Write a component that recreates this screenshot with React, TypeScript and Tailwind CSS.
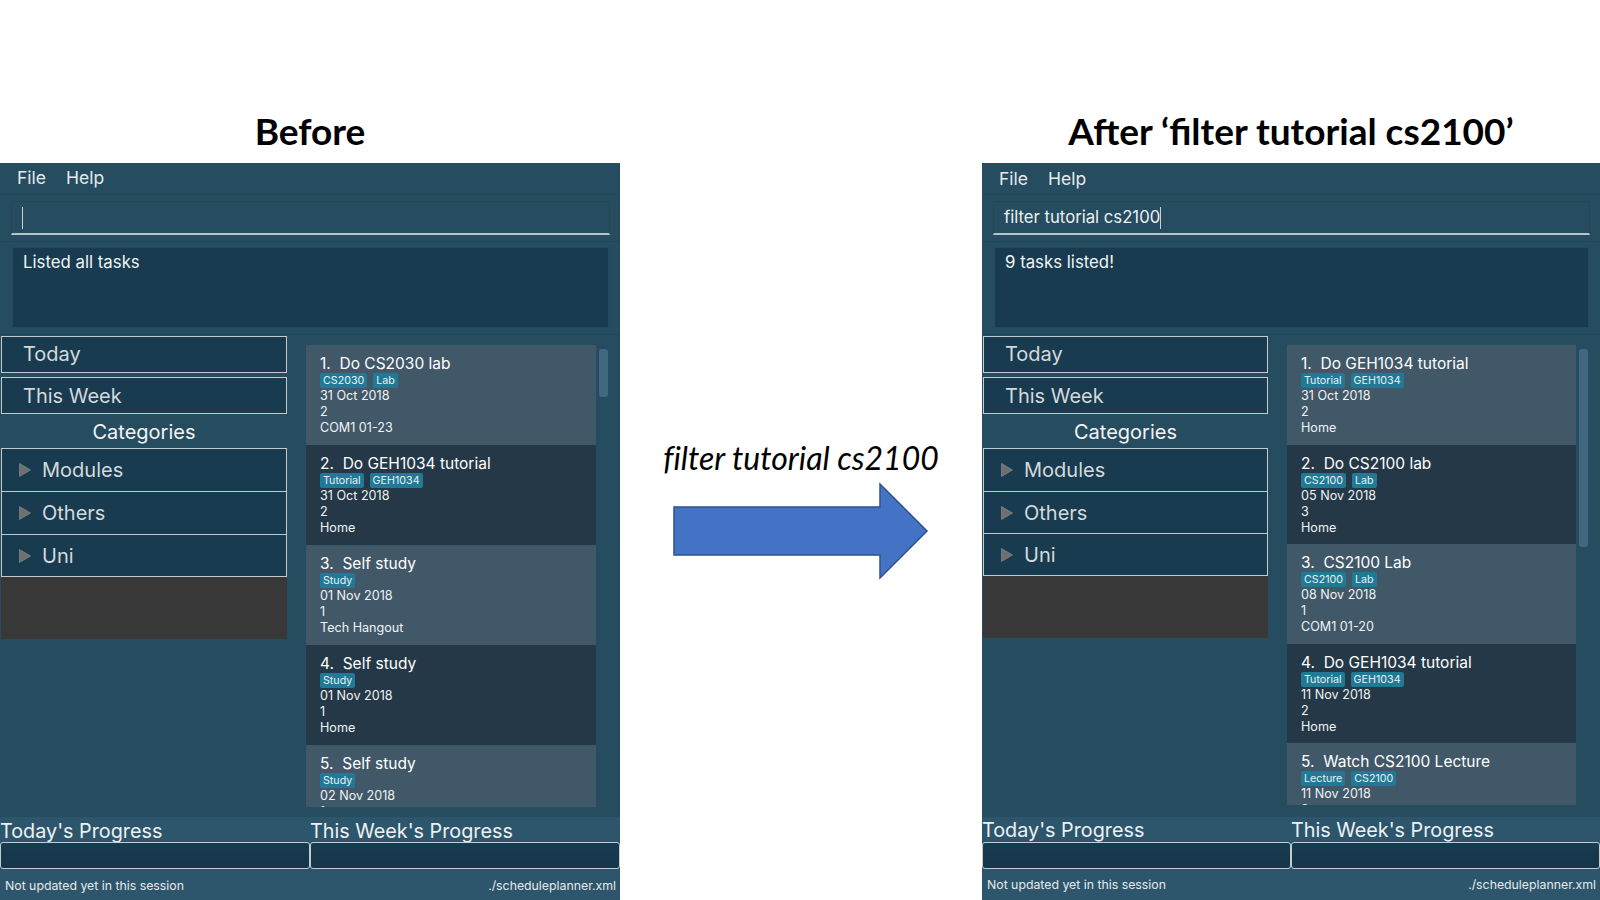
interface Task {
  title: string
  tags: string[]
  date: string
  priority: string
  venue: string
}

const beforeTasks: Task[] = [
  { title: '1.  Do CS2030 lab', tags: ['CS2030', 'Lab'], date: '31 Oct 2018', priority: '2', venue: 'COM1 01-23' },
  { title: '2.  Do GEH1034 tutorial', tags: ['Tutorial', 'GEH1034'], date: '31 Oct 2018', priority: '2', venue: 'Home' },
  { title: '3.  Self study', tags: ['Study'], date: '01 Nov 2018', priority: '1', venue: 'Tech Hangout' },
  { title: '4.  Self study', tags: ['Study'], date: '01 Nov 2018', priority: '1', venue: 'Home' },
  { title: '5.  Self study', tags: ['Study'], date: '02 Nov 2018', priority: '1', venue: 'Home' },
]

const afterTasks: Task[] = [
  { title: '1.  Do GEH1034 tutorial', tags: ['Tutorial', 'GEH1034'], date: '31 Oct 2018', priority: '2', venue: 'Home' },
  { title: '2.  Do CS2100 lab', tags: ['CS2100', 'Lab'], date: '05 Nov 2018', priority: '3', venue: 'Home' },
  { title: '3.  CS2100 Lab', tags: ['CS2100', 'Lab'], date: '08 Nov 2018', priority: '1', venue: 'COM1 01-20' },
  { title: '4.  Do GEH1034 tutorial', tags: ['Tutorial', 'GEH1034'], date: '11 Nov 2018', priority: '2', venue: 'Home' },
  { title: '5.  Watch CS2100 Lecture', tags: ['Lecture', 'CS2100'], date: '11 Nov 2018', priority: '2', venue: 'Home' },
]

function TaskCard({ task, index, compact }: { task: Task; index: number; compact: boolean }) {
  return (
    <div
      className={`shrink-0 pl-[14px] pt-[9px] text-[12.6px] leading-[16.2px] text-[#f0f3f5] ${compact ? 'h-[99.5px]' : 'h-[100px]'} ${
        index % 2 === 0 ? 'bg-[#415868]' : 'bg-[#243847]'
      }`}
    >
      <div className="h-[19px] whitespace-pre text-[15.5px] leading-[19px] text-white">{task.title}</div>
      <div className="flex h-[15px] gap-[6px]">
        {task.tags.map((tag) => (
          <span key={tag} className="h-[15px] rounded-[2px] bg-[#207a96] px-[3px] text-[10.7px] leading-[15px] text-[#e8f1f4]">
            {tag}
          </span>
        ))}
      </div>
      <div>{task.date}</div>
      <div>{task.priority}</div>
      <div>{task.venue}</div>
    </div>
  )
}

function Expander({ label, last, compact }: { label: string; last?: boolean; compact: boolean }) {
  return (
    <div
      className={`flex items-center border-x border-t border-[#c4cbd0] bg-[#183b4f] pl-[17px] text-[20px] text-[#d5d9dc] ${compact ? 'h-[42.7px]' : 'h-[43px]'} ${
        last ? 'border-b' : ''
      }`}
    >
      <svg width="12" height="14" viewBox="0 0 12 14" className="mr-[11px]">
        <path d="M0.5 0.5 L11.5 7 L0.5 13.5 Z" fill="#6f6f6f" stroke="#8d9497" strokeWidth="0.6" />
      </svg>
      {label}
    </div>
  )
}

function PlannerWindow({ command, message, tasks, compact }: { command: string; message: string; tasks: Task[]; compact: boolean }) {
  return (
    <div className="flex h-full flex-col bg-[#254c5f] font-['Inter',sans-serif]">
      <div className={`flex h-[31px] shrink-0 items-center gap-[20px] pl-[17px] text-[17.5px] text-[#e6e9eb] ${compact ? 'pt-[1px]' : ''}`}>
        <span>File</span>
        <span>Help</span>
      </div>

      {/* command box */}
      <div className="h-[47px] shrink-0 border-t border-[#234759] pl-[11px] pr-[10px] pt-[6px]">
        <div className="flex h-[34px] items-center border border-b-2 border-[#2d4350] border-b-[#b6c4cc] pl-[10px] text-[16.7px] text-[#eef1f3]">
          <span>{command}</span>
          <span className="h-[22px] w-px bg-[#c6d0d6]" />
        </div>
      </div>

      {/* result box */}
      <div className="h-[93px] shrink-0 border-t border-[#234759] pl-[12px] pr-[11px] pt-[5px]">
        <div className="h-[81px] border border-[#234a5d] bg-[#183b4f] pl-[10px] pt-[3px] text-[16.8px] leading-[22px] text-[#f2f4f5]">
          {message}
        </div>
      </div>

      <div className="flex min-h-0 flex-1 border-t border-[#234759]">
        {/* left panel */}
        <div className={`shrink-0 border-r border-[#2b4a5c] pt-[1px] ${compact ? 'w-[288px]' : 'w-[289px]'}`}>
          <div className="mx-[1px]">
            <div className="flex h-[37px] items-center border border-[#c4cbd0] bg-[#183b4f] pb-[1px] pl-[21px] text-[20px] text-[#d5d9dc]">Today</div>
            <div className="mt-[4px] flex h-[37px] items-center border border-[#c4cbd0] bg-[#183b4f] pl-[21px] text-[20px] text-[#d5d9dc]">This Week</div>
            <div className="flex h-[34px] items-center justify-center pt-[1px] text-[20px] text-[#f2f4f5]">Categories</div>
            <Expander label="Modules" compact={compact} />
            <Expander label="Others" compact={compact} />
            <Expander label="Uni" last compact={compact} />
            <div className="h-[62px] bg-[#383838]" />
          </div>
        </div>

        {/* task list */}
        <div className="flex min-w-0 flex-1 pl-[17px] pt-[10px]">
          <div className={`flex flex-col overflow-hidden ${compact ? 'h-[460px] w-[289px]' : 'h-[462px] w-[290px]'}`}>
            {tasks.map((task, i) => (
              <TaskCard key={task.title} task={task} index={i} compact={compact} />
            ))}
          </div>
          <div className="ml-[3px] mt-[4px]">
            <div className={`w-[9px] rounded-[3px] bg-[#41687f] ${compact ? 'h-[198px]' : 'h-[48px]'}`} />
          </div>
        </div>
      </div>

      {/* progress + status */}
      <div className="shrink-0 bg-[#2d566c]">
        <div className={`grid h-[25px] grid-cols-2 text-[19.8px] leading-[25px] text-[#eef1f3] ${compact ? 'pt-[1px]' : 'pt-[2px]'}`}>
          <span>Today's Progress</span>
          <span>This Week's Progress</span>
        </div>
        <div className="grid h-[27px] grid-cols-2">
          <div className="rounded-[3px] border border-[#c4cbd0] bg-gradient-to-b from-[#183b4f] to-[#16364a]" />
          <div className="rounded-[3px] border border-[#c4cbd0] bg-gradient-to-b from-[#183b4f] to-[#16364a]" />
        </div>
        <div className={`flex h-[31px] items-center justify-between pl-[5px] pr-[4px] text-[12.3px] text-[#e6e9eb] ${compact ? 'pt-[2px]' : 'pt-[3px]'}`}>
          <span>Not updated yet in this session</span>
          <span>./scheduleplanner.xml</span>
        </div>
      </div>
    </div>
  )
}

export default function App() {
  return (
    <div className="flex h-[900px] w-[1600px] overflow-hidden bg-white font-['Lato',sans-serif] text-black">
      <div className="flex w-[620px] shrink-0 flex-col">
        <h1 className="flex h-[163px] shrink-0 items-end justify-center pb-[10px] text-[37px] font-bold leading-[44px]">Before</h1>
        <div className="min-h-0 flex-1">
          <PlannerWindow command="" message="Listed all tasks" tasks={beforeTasks} compact={false} />
        </div>
      </div>

      <div className="flex w-[362px] shrink-0 flex-col items-center pt-[438px]">
        <p className="h-[40px] text-[32px] italic leading-[40px] [font-variant-ligatures:none]">filter tutorial cs2100</p>
        <svg width="258" height="100" viewBox="0 0 258 100" className="mt-[4px]">
          <path d="M2 25 H208 V2 L255 49 L208 96 V73 H2 Z" fill="#4472c4" stroke="#2f528f" strokeWidth="1.5" />
        </svg>
      </div>

      <div className="flex w-[618px] shrink-0 flex-col">
        <h1 className="flex h-[163px] shrink-0 items-end justify-center pb-[10px] text-[37px] font-bold leading-[44px]">After ‘filter tutorial cs2100’</h1>
        <div className="min-h-0 flex-1">
          <PlannerWindow command="filter tutorial cs2100" message="9 tasks listed!" tasks={afterTasks} compact />
        </div>
      </div>
    </div>
  )
}
